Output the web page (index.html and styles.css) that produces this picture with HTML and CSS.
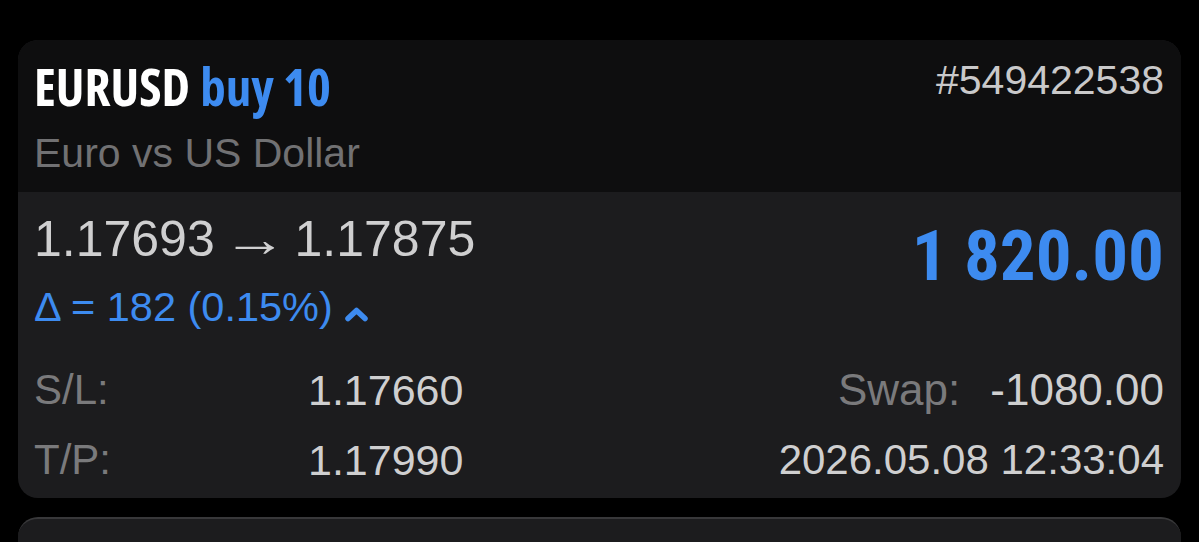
FILE: index.html
```html
<!DOCTYPE html>
<html lang="en">
<head>
  <meta charset="UTF-8">
  <meta name="viewport" content="width=device-width, initial-scale=1.0">
  <title>Trade - EURUSD</title>
  <link rel="stylesheet" href="styles.css">
</head>
<body>
  <div class="trade-list">
    <!-- Posición abierta -->
    <div class="trade-card">
      <div class="trade-head">
        <div class="trade-symbol">
          <div class="trade-title">EURUSD <span class="trade-side">buy 10</span></div>
          <div class="trade-desc">Euro vs US Dollar</div>
        </div>
        <div class="trade-ticket">#549422538</div>
      </div>
      <div class="trade-body">
        <div class="trade-prices">
          <div class="price-info">
            <div class="price-move">1.17693 <span class="price-arrow">&rarr;</span> 1.17875</div>
            <div class="price-delta">&Delta; = 182 (0.15%)
              <svg class="delta-arrow" width="25" height="16" viewBox="0 0 25 16">
                <polyline points="4,12.5 12.5,4.5 21,12.5" fill="none" stroke="currentColor" stroke-width="5.5" stroke-linecap="round" stroke-linejoin="round"/>
              </svg>
            </div>
          </div>
          <div class="trade-profit">1 820.00</div>
        </div>
        <div class="trade-details">
          <span class="detail-label">S/L:</span>
          <span class="detail-value">1.17660</span>
          <span class="detail-right"><span class="detail-label">Swap:</span><span class="detail-value">-1080.00</span></span>
          <span class="detail-label">T/P:</span>
          <span class="detail-value">1.17990</span>
          <span class="detail-right"><span class="detail-value">2026.05.08 12:33:04</span></span>
        </div>
      </div>
    </div>
    <div class="trade-card next"></div>
  </div>
</body>
</html>
```

FILE: styles.css
```css
/* Reset */
html, body {
  margin: 0;
  padding: 0;
  height: 100%;
}
body {
  background: #000;
  font-family: "Liberation Sans", Arial, sans-serif;
  color: #d0d0d1;
  overflow: hidden;
}
.trade-list {
  padding: 40px 18px 0;
}
.trade-card {
  background: #1c1c1e;
  border-radius: 20px;
  overflow: hidden;
}
/* Cabecera de la tarjeta */
.trade-head {
  background: #0e0e0f;
  display: flex;
  justify-content: space-between;
  align-items: flex-start;
  padding: 18px 17px 14px 16px;
}
.trade-title {
  font-family: "Open Sans", sans-serif;
  font-weight: 700;
  font-stretch: 75%;
  font-size: 51px;
  line-height: 56px;
  color: #fff;
}
.trade-side {
  color: #3d8bf0;
  margin-left: 1px;
}
.trade-desc {
  margin-top: 14px;
  font-size: 41px;
  line-height: 50px;
  color: #717173;
}
.trade-ticket {
  margin-top: -3px;
  font-size: 41px;
  line-height: 50px;
  color: #c9c9ca;
}
/* Cuerpo */
.trade-body {
  padding: 18px 17px 3px 16px;
}
.trade-prices {
  display: flex;
  justify-content: space-between;
  align-items: flex-start;
}
.price-move {
  font-size: 50px;
  line-height: 58px;
  color: #cfcfd0;
}
.price-arrow {
  display: inline-block;
  margin: 0 1px;
  transform: scaleX(1.3);
}
.price-delta {
  margin-top: 14px;
  font-size: 41.5px;
  line-height: 50px;
  color: #3d8bf0;
}
.delta-arrow {
  margin-left: 0;
  vertical-align: -1px;
}
.trade-profit {
  margin-top: 6px;
  font-family: Roboto, sans-serif;
  font-weight: 700;
  font-stretch: 75%;
  font-size: 71px;
  line-height: 80px;
  color: #3d8bf0;
}
.trade-details {
  margin-top: 23px;
  display: grid;
  grid-template-columns: 274px 1fr auto;
  font-size: 42px;
  line-height: 70px;
}
.detail-label {
  color: #7a7a7c;
}
.detail-value {
  color: #cfcfd0;
}
.trade-details > .detail-value {
  font-size: 43px;
}
.detail-right {
  display: flex;
  justify-content: flex-end;
  gap: 0 30px;
}
.detail-right .detail-label {
  font-size: 44px;
}
.detail-right .detail-value:only-child {
  font-size: 42px;
}
.detail-right .detail-label + .detail-value {
  font-size: 44px;
}
.trade-card.next {
  margin-top: 19px;
  height: 23px;
  border-top: 2px solid #38383a;
  border-radius: 20px 20px 0 0;
}
```
